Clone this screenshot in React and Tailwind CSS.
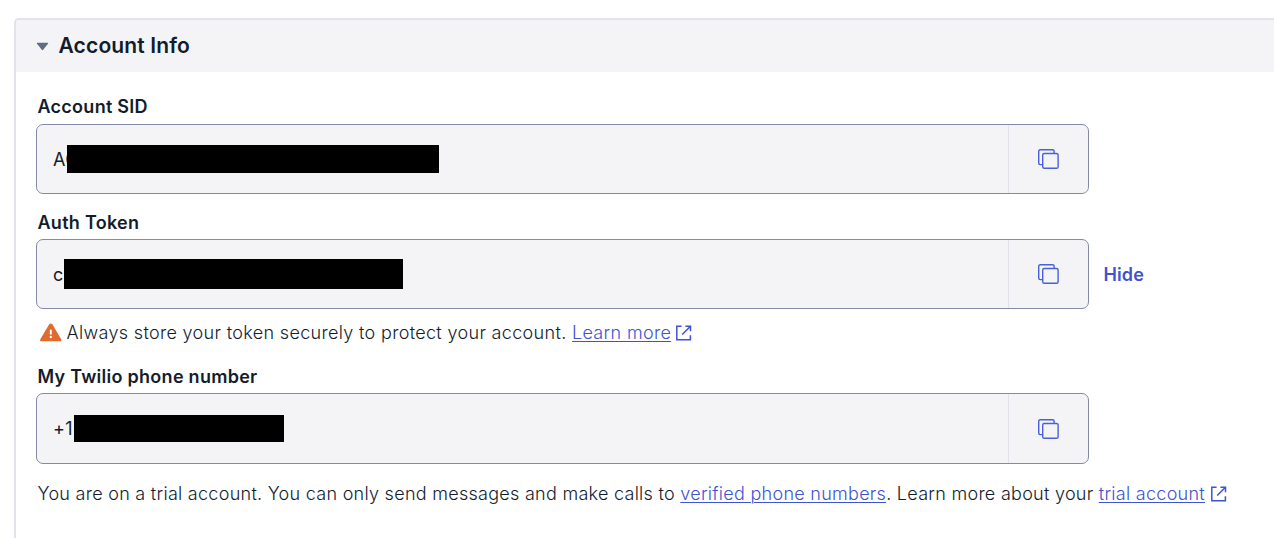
import React from "react";

function CopyIcon() {
  return (
    <svg width="21" height="20" viewBox="0 0 21 20" fill="none" stroke="#4a5fd8" strokeWidth="1.4" className="mr-px block">
      <path d="M4.5 15.6H2.2A1.5 1.5 0 0 1 .7 14.1V2.2A1.5 1.5 0 0 1 2.2 .7H14.6A1.5 1.5 0 0 1 16.1 2.2V4.5" />
      <rect x="4.7" y="4.5" width="15.4" height="14.8" rx="1.6" />
    </svg>
  );
}

function ExternalIcon() {
  return (
    <svg width="16" height="16" viewBox="0 0 16 16" fill="none" stroke="#4053d0" strokeWidth="1.5" className="mt-[2px] block shrink-0">
      <path d="M5.6 1.2H.8V14.8H14.4V10.2" />
      <path d="M9.4 1.2H14.5V6.2M14.2 1.5L6.2 9.5" />
    </svg>
  );
}

function WarningIcon() {
  return (
    <svg width="22" height="19" viewBox="0 0 22 19" className="block shrink-0">
      <path
        d="M9.4 1.1C9.9 .2 11.7 .2 12.2 1.1L21.2 16.2C21.7 17.1 21.2 18.3 20.1 18.3H1.2C.2 18.3 -.2 17.1 .3 16.2Z"
        fill="#df6b2f"
      />
      <path d="M10.8 7.6V10.8" stroke="#fff" strokeWidth="2" strokeLinecap="round" />
      <circle cx="10.8" cy="14" r="1.2" fill="#fff" />
    </svg>
  );
}

function Label({ children, className }) {
  return (
    <div className={`flex h-7 items-center pl-[1.5px] text-[18px] font-semibold tracking-[0.27px] text-[#121c2d] ${className}`}>
      <span>{children}</span>
    </div>
  );
}

function Field({ prefix, prefixClass, maskClass, className }) {
  return (
    <div className={`flex w-[1053px] rounded-[7px] border border-[#8589a8] bg-[#f4f4f6] ${className}`}>
      <div className="flex flex-1 items-center pl-4 text-[18px] tracking-[0.4px] text-[#121c2d]">
        <span className={`shrink-0 whitespace-nowrap ${prefixClass}`}>{prefix}</span>
        <span className={`relative shrink-0 bg-black ${maskClass}`} />
      </div>
      <button className="flex w-20 items-center justify-center border-l border-[#e1e3ea]">
        <CopyIcon />
      </button>
    </div>
  );
}

function TextLink({ children }) {
  return (
    <a href="#" className="text-[#4053d0] underline decoration-1 underline-offset-2">
      {children}
    </a>
  );
}

export default function App() {
  return (
    <div className="h-[538px] w-[1274px] overflow-hidden bg-white pt-[18px] pl-[14px] font-['Inter',sans-serif]">
      <section className="h-[560px] overflow-hidden rounded-tl-[5px] border-t-2 border-l-2 border-[#e1e3ea]">
        <header className="flex h-[52px] items-center gap-[9.5px] bg-[#f4f4f6] pl-5">
          <svg width="13" height="9" viewBox="0 0 13 9" className="block">
            <path d="M1.3 .8H11.7Q12.7 .8 12 1.7L7.2 7.8Q6.5 8.6 5.8 7.8L1 1.7Q.3 .8 1.3 .8Z" fill="#606b85" />
          </svg>
          <h1 className="text-[21px] font-semibold tracking-[0.15px] text-[#121c2d]">Account Info</h1>
        </header>

        <div className="pt-5 pl-5">
          <Label>Account SID</Label>
          <Field className="mt-1 h-[70px]" prefix="AC" prefixClass="w-[14px]" maskClass="h-7 w-[372px]" />

          <Label className="mt-[14px]">Auth Token</Label>
          <div className="mt-[3px] flex items-center">
            <Field className="h-[70px]" prefix="c" prefixClass="w-[11px]" maskClass="h-[30px] w-[339px]" />
            <button className="ml-[14.5px] text-[18px] font-semibold tracking-[0.1px] text-[#4053d0]">Hide</button>
          </div>
          <div className="mt-[9px] flex h-7 items-center pl-[3.5px] text-[18px] font-light whitespace-nowrap text-[#121c2d]">
            <WarningIcon />
            <p className="mr-[5px] ml-[5px] tracking-[0.33px]">
              Always store your token securely to protect your account. <TextLink>Learn more</TextLink>
            </p>
            <ExternalIcon />
          </div>

          <Label className="mt-4">My Twilio phone number</Label>
          <Field className="mt-[3px] h-[71px]" prefix="+1" prefixClass="w-[21px]" maskClass="h-[27px] w-[210px]" />
          <div className="mt-[15px] flex h-7 items-center pl-[1.5px] text-[18px] font-light whitespace-nowrap text-[#121c2d]">
            <p className="mr-[6px] tracking-[0.275px]">
              You are on a trial account. You can only send messages and make calls to{" "}
              <TextLink>verified phone numbers</TextLink>. Learn more about your <TextLink>trial account</TextLink>
            </p>
            <ExternalIcon />
          </div>
        </div>
      </section>
    </div>
  );
}
